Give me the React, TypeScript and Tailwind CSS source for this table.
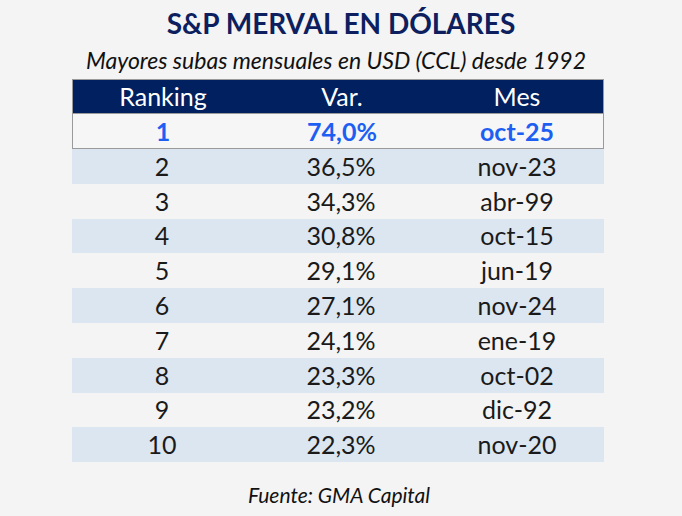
import React from "react";

const rows = [
  ["2", "36,5%", "nov-23"],
  ["3", "34,3%", "abr-99"],
  ["4", "30,8%", "oct-15"],
  ["5", "29,1%", "jun-19"],
  ["6", "27,1%", "nov-24"],
  ["7", "24,1%", "ene-19"],
  ["8", "23,3%", "oct-02"],
  ["9", "23,2%", "dic-92"],
  ["10", "22,3%", "nov-20"],
];

export default function App() {
  return (
    <div
      className="w-[682px] h-[516px] bg-[#f4f4f4] flex flex-col items-center text-[#1a1a1a]"
      style={{ fontFamily: "Lato, 'Liberation Sans', sans-serif" }}
    >
      <div className="mt-[5px] h-[36px] flex items-center text-[28px] font-bold text-[#0d1f5e] leading-none">
        S&amp;P MERVAL EN DÓLARES
      </div>
      <div className="h-[38px] mr-[10px] flex items-center text-[23px] italic leading-none text-[#111]">
        Mayores subas mensuales en USD (CCL) desde 1992
      </div>
      <div className="w-[532px] mr-[6px] flex flex-col text-[25px] leading-none">
        <div className="h-[35px] flex bg-[#002060] text-white border border-[#9a9a9a]">
          <div className="w-[180px] flex items-center justify-center">Ranking</div>
          <div className="w-[178px] flex items-center justify-center">Var.</div>
          <div className="flex-1 flex items-center justify-center">Mes</div>
        </div>
        <div className="h-[35px] flex bg-[#f6f6f6] text-[#1d5ff2] font-bold border border-t-0 border-[#9a9a9a]">
          <div className="w-[180px] flex items-center justify-center">1</div>
          <div className="w-[178px] flex items-center justify-center">74,0%</div>
          <div className="flex-1 flex items-center justify-center">oct-25</div>
        </div>
        {rows.map((r, i) => (
          <div
            key={r[0]}
            className={`h-[34.8px] flex ${i % 2 === 0 ? "bg-[#dce6f1]" : "bg-[#f4f4f4]"}`}
          >
            <div className="w-[180px] flex items-center justify-center">{r[0]}</div>
            <div className="w-[178px] flex items-center justify-center">{r[1]}</div>
            <div className="flex-1 flex items-center justify-center">{r[2]}</div>
          </div>
        ))}
      </div>
      <div className="mt-[22px] mr-[4px] text-[21px] italic leading-none text-[#111]">Fuente: GMA Capital</div>
    </div>
  );
}
